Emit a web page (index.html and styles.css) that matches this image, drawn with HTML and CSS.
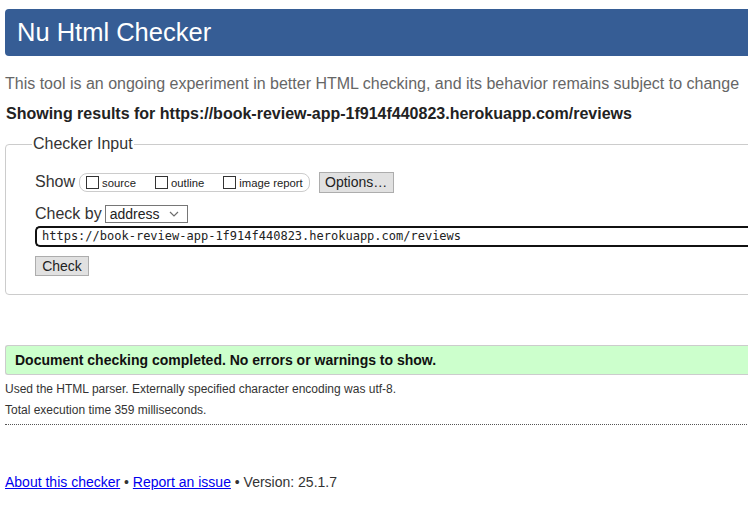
FILE: index.html
```html
<!DOCTYPE html>
<html lang="en">
<head>
<meta charset="utf-8">
<title>Nu Html Checker</title>
<link rel="stylesheet" href="styles.css">
</head>
<body>
<div class="page">
  <h1 class="banner">Nu Html Checker</h1>
  <p class="intro">This tool is an ongoing experiment in better HTML checking, and its behavior remains subject to change</p>
  <p class="showing">Showing results for https://book-review-app-1f914f440823.herokuapp.com/reviews</p>
  <fieldset class="checker">
    <legend class="legend">Checker Input</legend>
    <div class="row show-row">
      <span class="row-label">Show</span>
      <span class="opts">
        <label class="opt"><span class="box"></span><span class="opt-text">source</span></label>
        <label class="opt"><span class="box"></span><span class="opt-text">outline</span></label>
        <label class="opt"><span class="box"></span><span class="opt-text">image report</span></label>
      </span>
      <span class="btn btn-options">Options…</span>
    </div>
    <div class="row by-row">
      <span class="row-label">Check by</span>
      <span class="select">address<svg class="chev" width="10" height="6" viewBox="0 0 10 6"><path d="M1 1l4 4 4-4" fill="none" stroke="#6d6d6d" stroke-width="1.2"/></svg></span>
    </div>
    <div class="url">https://book-review-app-1f914f440823.herokuapp.com/reviews</div>
    <span class="btn btn-check">Check</span>
  </fieldset>
  <div class="success">Document checking completed. No errors or warnings to show.</div>
  <p class="details">Used the HTML parser. Externally specified character encoding was utf-8.</p>
  <p class="details">Total execution time 359 milliseconds.</p>
  <hr class="dots">
  <p class="footer"><a href="#">About this checker</a> • <a href="#">Report an issue</a> • Version: 25.1.7</p>
</div>
</body>
</html>
```
FILE: styles.css
```css
html, body {
  margin: 0;
  padding: 0;
  overflow: hidden;
  background: #fff;
}
body {
  font-family: "Liberation Sans", Arial, sans-serif;
  color: #222;
}
.page {
  width: 800px;
  padding: 9px 0 0 5px;
}
.banner {
  margin: 0;
  height: 47px;
  box-sizing: border-box;
  padding: 0 0 0 12px;
  background: #365d95;
  color: #fff;
  font-weight: normal;
  font-size: 25.5px;
  line-height: 47px;
  border-radius: 4px;
}
.intro {
  margin: 19px 0 0;
  font-size: 16px;
  line-height: 18px;
  color: #666;
}
.showing {
  margin: 12px 0 0 1px;
  font-size: 16px;
  line-height: 18px;
  font-weight: bold;
  color: #222;
}
.checker {
  margin: 12px 0 0;
  padding: 10px 0 18px 29px;
  border: 1px solid #ccc;
  border-radius: 4px;
  min-width: 0;
}
.legend {
  font-size: 16px;
  line-height: 18px;
  color: #333;
  padding: 0 1px;
  margin-left: -3px;
}
.row {
  display: flex;
  align-items: center;
}
.show-row {
  height: 22px;
  margin-top: 8px;
}
.row-label {
  font-size: 16px;
  line-height: 18px;
  color: #333;
}
.opts {
  display: flex;
  align-items: center;
  margin-left: 4px;
  height: 17px;
  padding: 0 6px;
  border: 1px solid #ccc;
  border-radius: 8px;
}
.opt {
  display: flex;
  align-items: center;
  margin-right: 19px;
}
.opt:last-child {
  margin-right: 0;
}
.box {
  width: 11px;
  height: 11px;
  border: 1px solid #333;
  background: #fff;
}
.opt-text {
  margin-left: 3px;
  font-size: 11.3px;
  color: #222;
  position: relative;
  top: 1px;
}
.btn {
  display: inline-flex;
  align-items: center;
  justify-content: center;
  box-sizing: border-box;
  background: #e1e1e1;
  border: 1px solid #adadad;
  color: #222;
  font-size: 14px;
}
.btn-options {
  width: 75px;
  height: 21px;
  margin-left: 9px;
}
.by-row {
  margin-top: 11px;
  height: 19px;
}
.select {
  display: inline-flex;
  align-items: center;
  justify-content: space-between;
  box-sizing: border-box;
  width: 83px;
  height: 18px;
  margin-left: 3px;
  padding: 0 8px 0 4px;
  border: 1px solid #767676;
  font-size: 14px;
  color: #222;
}
.url {
  margin-top: 3px;
  height: 21px;
  box-sizing: border-box;
  border: 2px solid #111;
  border-right: none;
  border-radius: 5px 0 0 5px;
  padding: 0 0 0 5px;
  font-family: "DejaVu Sans Mono", "Liberation Mono", monospace;
  font-size: 12px;
  line-height: 17px;
  color: #222;
}
.btn-check {
  margin-top: 9px;
  width: 54px;
  height: 20px;
}
.success {
  margin-top: 50px;
  height: 30px;
  box-sizing: border-box;
  padding-left: 9px;
  background: #ccffcc;
  border: 1px solid #ccc;
  border-right: none;
  border-radius: 3px 0 0 3px;
  font-weight: bold;
  font-size: 14px;
  line-height: 28px;
  color: #111;
}
.details {
  margin: 7px 0 0;
  font-size: 12px;
  line-height: 14px;
  color: #333;
}
.details + .details {
  margin-top: 7px;
}
.dots {
  margin: 7px 0 0;
  border: none;
  border-top: 1px dotted #555;
  height: 0;
}
.footer {
  margin: 49px 0 0;
  font-size: 14px;
  line-height: 16px;
  color: #333;
}
.footer a {
  color: #00e;
}
```
